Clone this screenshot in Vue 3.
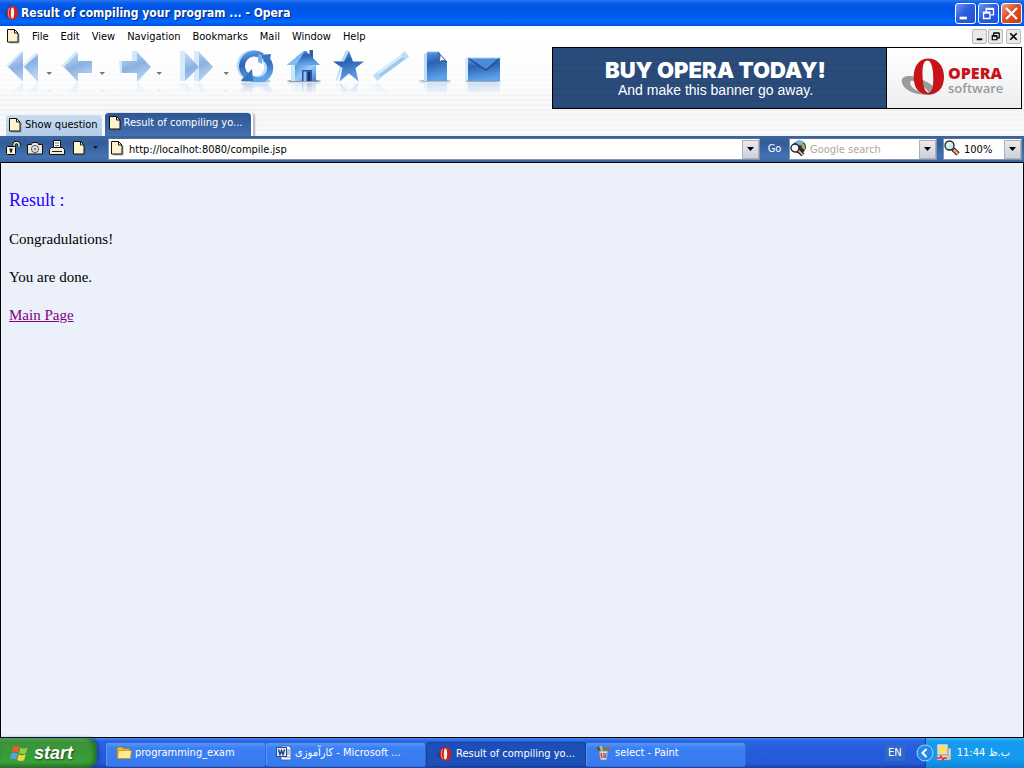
<script setup>
import { ref } from 'vue'

const menus = ['File', 'Edit', 'View', 'Navigation', 'Bookmarks', 'Mail', 'Window', 'Help']
const url = ref('http://localhot:8080/compile.jsp')
const search = ref('')
const zoom = ref('100%')
const tools = [
  { id: 't-rewind', label: 'Rewind', x: 5, w: 53 },
  { id: 't-back', label: 'Back', x: 58, w: 55 },
  { id: 't-forward', label: 'Forward', x: 113, w: 57 },
  { id: 't-fast', label: 'Fast forward', x: 170, w: 64 },
  { id: 't-reload', label: 'Reload', x: 234, w: 48 },
  { id: 't-home', label: 'Home', x: 282, w: 44 },
  { id: 't-star', label: 'Bookmarks', x: 326, w: 43 },
  { id: 't-wand', label: 'Wand', x: 369, w: 46 },
  { id: 't-doc', label: 'New page', x: 415, w: 42 },
  { id: 't-mail', label: 'Mail', x: 457, w: 50 },
]
const small = [
  { id: 'i-lock', label: 'Security' },
  { id: 'i-camera', label: 'Images' },
  { id: 'i-printer', label: 'Print' },
  { id: 'i-page', label: 'Mode' },
]
const tasks = [
  { icon: 'i-folder', text: 'programming_exam' },
  { icon: 'i-word', text: 'کارآموزی - Microsoft ...' },
  { icon: 'i-opera', text: 'Result of compiling yo...', active: true },
  { icon: 'i-paint', text: 'select - Paint' },
]
</script>

<template>
  <svg class="defs" aria-hidden="true">
    <defs>
      <linearGradient id="pale" x1="0" y1="0" x2="0.4" y2="1">
        <stop offset="0" stop-color="#c3ddf8" /><stop offset=".55" stop-color="#8bb0e0" /><stop offset="1" stop-color="#b4d4f6" />
      </linearGradient>
      <linearGradient id="deep" x1="0" y1="0" x2="0.2" y2="1">
        <stop offset="0" stop-color="#5b9be0" /><stop offset=".4" stop-color="#2c62b4" /><stop offset="1" stop-color="#5fa4e8" />
      </linearGradient>
      <linearGradient id="wall" x1="0" y1="0" x2="1" y2="1">
        <stop offset="0" stop-color="#4a87d3" /><stop offset=".5" stop-color="#9dcbf8" /><stop offset="1" stop-color="#3c7ccb" />
      </linearGradient>
      <symbol id="i-page" viewBox="0 0 16 16">
        <path d="M4 3h7l3.500 3.500v9H4z" fill="#555" opacity=".5" />
        <path d="M2.500 1.500h7l3.500 3.500v9H2.500z" fill="#fdf3cf" stroke="#111" />
        <path d="M9.500 1.500v3.500H13z" fill="#fff" stroke="#111" />
      </symbol>
      <symbol id="i-lock" viewBox="0 0 16 16">
        <path d="M9 8V5a2.500 2.500 0 0 1 5 0v2" fill="none" stroke="#000" stroke-width="3" />
        <path d="M9 8V5a2.500 2.500 0 0 1 5 0v2" fill="none" stroke="#f4edcf" stroke-width="1.500" />
        <rect x="1.500" y="6.500" width="9" height="8" rx="1" fill="#fff8e0" stroke="#000" />
        <path d="M4.500 8.500h3v2H7V12.500H5v-2h-.5z" fill="#222" />
      </symbol>
      <symbol id="i-camera" viewBox="0 0 16 16">
        <path d="M.5 4.500h4l1-2h5l1 2h4v9.500H.5z" fill="#e9e6dc" stroke="#111" />
        <circle cx="8" cy="9" r="3.500" fill="#fff" stroke="#444" /><circle cx="8" cy="9" r="1.600" fill="#789" />
      </symbol>
      <symbol id="i-printer" viewBox="0 0 16 16">
        <path d="M4.500 .5h7v8h-7z" fill="#fff" stroke="#111" /><path d="M6 3h4M6 5.500h4" stroke="#777" />
        <path d="M.5 9.500l2-2h11l2 2v5H.5z" fill="#f2ecd5" stroke="#111" /><path d="M3 11.500h10" stroke="#222" />
      </symbol>
      <symbol id="i-opera" viewBox="0 0 16 16">
        <path d="M0 9c0-3 4-4 7-2s6 6 5 7-11 0-12-5z" fill="#25406e" opacity=".7" />
        <path fill-rule="evenodd" d="M8.500 1c3.500 0 5.500 3 5.500 7s-2 7-5.500 7S3 12 3 8s2-7 5.500-7zm0 1.500C7 2.500 6.800 4.600 6.800 8s.2 5.500 1.700 5.500 1.700-2.100 1.700-5.500-.2-5.500-1.700-5.500z" fill="#d41f16" />
        <path d="M9 2.500c1.600 1 1.600 10 0 11-2 .5-2.200-1-2.200-5.500S7.500 2 9 2.500z" fill="#f6ece8" />
        <path d="M5.500 3C4 5.500 4 10.500 5.500 13" stroke="#ff8c74" fill="none" />
      </symbol>
      <symbol id="i-glass" viewBox="0 0 16 16">
        <path d="M9 9l5 5" stroke="#111" stroke-width="4.500" /><path d="M9.500 9.500l4.500 4.500" stroke="#e7a96d" stroke-width="2.500" />
        <circle cx="5.500" cy="5.500" r="4.500" fill="#c8ebf3" stroke="#222" stroke-width="1.300" /><path d="M3.500 5.500l3-3" stroke="#fff" stroke-width="1.500" />
      </symbol>
      <symbol id="i-search" viewBox="0 0 16 16">
        <circle cx="9.500" cy="7" r="6.500" fill="#25364e" /><path d="M5 2.500c3-3 8-2 9 0l-3 3-4-1z" fill="#74b6e8" /><path d="M11 2l4 3v5l-3-2z" fill="#b2a64a" />
        <path d="M8 10l5 5" stroke="#111" stroke-width="4" /><path d="M8 10l5 5" stroke="#efad76" stroke-width="2" />
        <circle cx="5" cy="8" r="4" fill="#eef8fb" stroke="#222" stroke-width="1.300" />
      </symbol>
      <symbol id="i-folder" viewBox="0 0 16 16">
        <path d="M1 3.500l1-1.500h4l1.500 1.500H13.500V13H1z" fill="#e9b93a" stroke="#9a7312" stroke-width=".7" />
        <path d="M2.500 5.500H15.500L14.500 13.500H1.500z" fill="#ffe98e" stroke="#b8891a" stroke-width=".7" />
      </symbol>
      <symbol id="i-word" viewBox="0 0 16 16">
        <path d="M5 1h8l2 2v12H5z" fill="#fff" stroke="#4665a5" /><path d="M11 5h3M11 7h3M11 9h3M7 12h7" stroke="#6583bd" />
        <rect x=".5" y="2.500" width="10" height="9" fill="#dfe9fb" stroke="#294d96" /><path d="M2.500 4.500L4 9.500l1.500-4 1.500 4 1.500-5" stroke="#1d3f8e" fill="none" stroke-width="1.400" />
      </symbol>
      <symbol id="i-paint" viewBox="0 0 16 16">
        <path d="M4 7L1.500 2" stroke="#7d3c14" stroke-width="2" /><path d="M6 7L5 1" stroke="#e8c22e" stroke-width="2" />
        <path d="M8 7l1-5" stroke="#3da23f" stroke-width="2" /><path d="M10 8l3-6" stroke="#d8541f" stroke-width="2.500" />
        <path d="M3 6h9l-1.500 9h-6z" fill="#cfdbe8" stroke="#7b8898" stroke-width=".6" /><path d="M5 8l1 5M8 8v5" stroke="#dc432a" stroke-width="1.500" /><path d="M10 8l-.5 5" stroke="#2864c4" />
      </symbol>
      <symbol id="i-net" viewBox="0 0 16 18">
        <path d="M2 1h9v9H2z" fill="#ffe25a" stroke="#d6dcec" stroke-width="1.500" /><path d="M12 4h3v12h-4v-5h1z" fill="#e5dfc8" stroke="#68728a" stroke-width=".6" />
        <path d="M1 11h12v5H1z" fill="#dcd9d2" stroke="#8d8f98" stroke-width=".6" /><path d="M1 14h3l1-2 2 4 1-2h3" stroke="#e02c1d" stroke-width="1.300" fill="none" />
      </symbol>

      <symbol id="t-rewind" viewBox="5 47 53 35">
        <path d="M6 66L20 52l3-1v4L9 68zM22 66l13-13h3v4L25 68z" fill="#d5eafd" />
        <path d="M8 67L23 52v29.500zM24 67l14-13v28z" fill="url(#pale)" />
        <path d="M46.500 72h5.500l-2.800 3z" fill="#777" />
      </symbol>
      <symbol id="t-back" viewBox="58 47 55 35">
        <path d="M61 66L76 51l2 2v8h14v3L66 69z" fill="#cfe6fc" />
        <path d="M64 67L78 53v8h14v12H78v9z" fill="url(#pale)" />
        <path d="M99.500 72h5.500l-2.800 3z" fill="#777" />
      </symbol>
      <symbol id="t-forward" viewBox="113 47 57 35">
        <path d="M132 51h5l3 5-3 8h-5zM119 61h4v12h-3z" fill="#cfe6fc" />
        <path d="M122 61h15v-9l14 15-14 15v-9h-15z" fill="url(#pale)" />
        <path d="M156.500 72h5.500l-2.800 3z" fill="#777" />
      </symbol>
      <symbol id="t-fast" viewBox="170 47 64 35">
        <path d="M180 51h5v30h-5zM194 51h5v30h-5z" fill="#d5eafd" />
        <path d="M185 52l14 15-14 14zM199 52l14 15-14 15z" fill="url(#pale)" />
        <path d="M223.500 72h5.500l-2.800 3z" fill="#777" />
      </symbol>
      <symbol id="t-reload" viewBox="234 47 48 35">
        <ellipse cx="256" cy="81" rx="15" ry="1.500" fill="#6b7f99" opacity=".5" />
        <g transform="translate(-1.500 -.5)" fill="none" stroke="#b9dcf9" stroke-width="6"><path d="M248 77A12 12 0 0 1 259 55M264 58A12 12 0 0 1 253 79" /></g>
        <g fill="none" stroke="url(#deep)" stroke-width="6"><path d="M247 76A12 12 0 0 1 262 56M265 58A12 12 0 0 1 251 78" /></g>
        <path d="M259 55l12-1-2 11zM241 81l1-2 10-10 1 12z" fill="#3575c4" /><path d="M258 54v8l4 2v-9z" fill="#74aee9" />
      </symbol>
      <symbol id="t-home" viewBox="282 47 44 35">
        <ellipse cx="304" cy="81" rx="17" ry="1.500" fill="#41536b" opacity=".6" />
        <path d="M291 66l5-3v18h-5z" fill="#c5e6ff" /><path d="M295 63h21v18h-21z" fill="url(#wall)" />
        <path d="M309.500 50h3.500v11h-3.500z" fill="#315e9f" /><path d="M287 65l17-14 2 0 14 14z" fill="url(#deep)" /><path d="M287 65l18-14-9 14z" fill="#84bbf1" />
        <path d="M302 70h10v11h-10z" fill="#2657a4" /><path d="M303.500 71.500h3v10h-3z" fill="#98bde8" /><path d="M308 72h2v9h-2z" fill="#142f66" />
      </symbol>
      <symbol id="t-star" viewBox="326 47 43 35">
        <path d="M346 50l3 1-5 11-7 19-1-1 4-13-7-6h8z" fill="#b4daf9" />
        <path d="M349 51l4 10.500h11L355.500 68l3 13.500-9.500-8-9.500 8 3-13.500-9.500-6.500h11z" fill="url(#deep)" />
      </symbol>
      <symbol id="t-wand" viewBox="369 47 46 35">
        <path d="M376 77l30-22" stroke="#9fc7ee" stroke-width="6" /><path d="M375 75.500l30-22" stroke="#d8edfd" stroke-width="2.500" />
        <path d="M375 78l4-3M403 57l4-3" stroke="#bedcf7" stroke-width="7" />
      </symbol>
      <symbol id="t-doc" viewBox="415 47 42 35">
        <ellipse cx="435" cy="81" rx="16" ry="1.500" fill="#41536b" opacity=".4" />
        <path d="M424 54l4-2v29h-4z" fill="#b7ddfb" /><path d="M427 52h11l9 10v19h-20z" fill="url(#deep)" />
        <path d="M427 52h11" stroke="#8fc3f3" /><path d="M438 52c3 2 2 5 1 10 3-2 6-2 8 0z" fill="#e9f4fe" stroke="#1d4387" stroke-width=".8" />
      </symbol>
      <symbol id="t-mail" viewBox="457 47 50 35">
        <ellipse cx="483" cy="81" rx="18" ry="1.500" fill="#41536b" opacity=".5" />
        <path d="M465 58h4v22h-4z" fill="#d6ecfd" /><path d="M468 58h32v23h-32z" fill="url(#deep)" /><path d="M468 58h32L486 70z" fill="#4a8cdb" />
        <path d="M468 58l18 12 14-12" fill="none" stroke="#204f96" stroke-width="1.500" /><path d="M468 58h32" stroke="#a8d3f8" />
      </symbol>
    </defs>
  </svg>

  <div class="screen">
    <header class="title">
      <svg class="ic"><use href="#i-opera" /></svg>
      <h1>Result of compiling your program ... - Opera</h1>
      <div class="winbtns">
        <button aria-label="Minimize"><svg viewBox="0 0 21 21"><path d="M4 14h8v3H4z" fill="#fff" /></svg></button>
        <button aria-label="Restore"><svg viewBox="0 0 21 21"><path d="M8 9V5h8v7h-3M5 9h7v7H5zM5 10h7M8 6h8" fill="none" stroke="#fff" stroke-width="1.500" /></svg></button>
        <button class="close" aria-label="Close"><svg viewBox="0 0 21 21"><path d="M4.500 4.500l12 12M16.500 4.500l-12 12" stroke="#fff" stroke-width="2.500" /></svg></button>
      </div>
    </header>

    <div class="chrome">
      <nav class="menu">
        <svg class="ic"><use href="#i-page" /></svg>
        <button v-for="m in menus" :key="m">{{ m }}</button>
        <div class="mdi">
          <button aria-label="Minimize page"><svg viewBox="0 0 14 14"><path d="M4 9h6v2H4z" /></svg></button>
          <button aria-label="Restore page"><svg viewBox="0 0 14 14"><path d="M5 6V3.500h6v5H9M3.500 6.500h5v4h-5zM5 3h6M3 6h6" fill="none" stroke="#000" stroke-width="1.300" /></svg></button>
          <button class="gap" aria-label="Close page"><svg viewBox="0 0 14 14"><path d="M3.500 3.500l7 7M10.500 3.500l-7 7" stroke="#000" stroke-width="1.800" /></svg></button>
        </div>
      </nav>

      <div class="toolbar">
        <button v-for="t in tools" :key="t.id" :aria-label="t.label">
          <svg :width="t.w" height="35"><use :href="'#' + t.id" /></svg>
        </button>
        <a class="banner" href="#">
          <span class="pitch"><strong>BUY OPERA TODAY!</strong><span>And make this banner go away.</span></span>
          <span class="brand">
            <svg viewBox="0 0 44 38">
              <path fill-rule="evenodd" d="M1 25c-2-7 7-9 17-5 13 5 22 13 16 16S4 37 1 25zm9-2c-3 5 6 12 19 13C27 31 15 22 10 23z" fill="#9a9c9c" />
              <path fill-rule="evenodd" d="M28 0c9 0 16 7 16 19s-7 18-16 18-15-6-15-18S19 0 28 0zm-1 2c-4 0-5 6-5 14 0 10 2 19 6 19s5-6 5-15c0-10-2-18-6-18z" fill="#c81418" />
            </svg>
            <span class="words"><b>OPERA</b><span>software</span></span>
          </span>
        </a>
      </div>

      <div class="tabs" role="tablist">
        <button class="tab" role="tab"><svg class="ic"><use href="#i-page" /></svg>Show question</button>
        <button class="tab on" role="tab" aria-selected="true"><svg class="ic"><use href="#i-page" /></svg>Result of compiling yo...</button>
      </div>
    </div>

    <form class="address" @submit.prevent>
      <div class="smalls">
        <button v-for="s in small" :key="s.id" type="button" :aria-label="s.label"><svg class="ic"><use :href="'#' + s.id" /></svg></button>
        <button type="button" class="more" aria-label="More"><svg viewBox="0 0 5 3"><path d="M0 0h5L2.500 3z" fill="#0b1a33" /></svg></button>
      </div>
      <div class="box url">
        <svg class="ic"><use href="#i-page" /></svg>
        <input v-model="url" aria-label="Address">
        <button type="button" aria-label="Address history"><svg viewBox="0 0 7 4"><path d="M0 0h7L3.500 4z" /></svg></button>
      </div>
      <button class="go">Go</button>
      <div class="box search">
        <svg class="ic"><use href="#i-search" /></svg>
        <input v-model="search" aria-label="Search" placeholder="Google search">
        <button type="button" aria-label="Search engines"><svg viewBox="0 0 7 4"><path d="M0 0h7L3.500 4z" /></svg></button>
      </div>
      <div class="box zoom">
        <svg class="ic"><use href="#i-glass" /></svg>
        <input v-model="zoom" aria-label="Zoom">
        <button type="button" aria-label="Zoom levels"><svg viewBox="0 0 7 4"><path d="M0 0h7L3.500 4z" /></svg></button>
      </div>
    </form>

    <main class="page">
      <h2>Result :</h2>
      <p>Congradulations!</p>
      <p>You are done.</p>
      <p><a href="#">Main Page</a></p>
    </main>

    <footer class="taskbar">
      <button class="start">
        <svg viewBox="0 0 20 18">
          <path d="M3 3c2-1.500 4-1.500 6.500 0L8 8.500C6 7 4 7 1.500 8.500z" fill="#f0592a" /><path d="M10.500 3.500c2 1.500 4 1.500 7 0L16 9c-2.500 1.500-4.500 1-7 0z" fill="#8ed047" />
          <path d="M1.200 9.800c2-1.500 4-1.500 6.500 0L6.200 15.500C4 14 2 14-.2 15.500z" fill="#5b9df2" /><path d="M8.700 10.300c2 1.500 4 1.500 7 0L14.200 16c-2.500 1.500-4.500 1-7 0z" fill="#fbd335" />
        </svg>start
      </button>
      <button v-for="t in tasks" :key="t.icon" class="task" :class="{ active: t.active }">
        <svg class="ic"><use :href="'#' + t.icon" /></svg><span dir="ltr">{{ t.text }}</span>
      </button>
      <button class="lang">EN</button>
      <div class="tray">
        <button class="expand" aria-label="Show hidden icons"><svg viewBox="0 0 18 18"><circle cx="9" cy="9" r="8" fill="#2489e8" stroke="#9ed4fb" /><path d="M10.500 5l-4 4 4 4" fill="none" stroke="#fff" stroke-width="2" /></svg></button>
        <svg class="net"><use href="#i-net" /></svg>
        <time dir="ltr"><bdi>11:44</bdi> <bdi>ب.ظ</bdi></time>
      </div>
    </footer>
  </div>
</template>

<style>
body { margin: 0; }
</style>

<style scoped>
* { box-sizing: border-box; }
button, input { font: inherit; color: inherit; padding: 0; margin: 0; border: 0; background: none; }
button { white-space: nowrap; }
.defs { position: absolute; width: 0; height: 0; }
.ic { width: 16px; height: 16px; flex: none; display: block; }
.screen { min-height: 100vh; display: flex; flex-direction: column; font: 11px/14px "DejaVu Sans Condensed", "DejaVu Sans", sans-serif; color: #000; background: #ecf0fb; }

.title { height: 26px; display: flex; align-items: center; gap: 1px; padding: 0 2px 0 4px; color: #fff;
  background: linear-gradient(#2a78f0 0, #0a5cea 12%, #0054e3 30%, #005cf0 60%, #0068ff 85%, #0050d8 100%); }
.title h1 { margin: 0; flex: 1; font: bold 12px/16px "DejaVu Sans Condensed", "DejaVu Sans", sans-serif; text-shadow: 1px 1px 1px #05246f; white-space: nowrap; }
.winbtns { display: flex; gap: 2px; }
.winbtns button { width: 21px; height: 21px; border: 1px solid #fff; border-radius: 3px; background: linear-gradient(135deg, #6f98f5, #2c5ce0 45%, #1f54dd); }
.winbtns svg { display: block; width: 19px; height: 19px; }
.winbtns .close { background: linear-gradient(135deg, #f0a084, #df4f27 45%, #c63c10); }

.chrome { background: repeating-linear-gradient(rgba(255, 255, 255, .5) 0 3px, transparent 3px 5px), linear-gradient(#fff 15%, #f8f9fb 55%, #eff1f3 75%, #f5f6f8); }
.menu { height: 21px; display: flex; align-items: center; padding: 0 3px 0 5px; }
.menu > button { margin-left: 12px; }
.menu > .ic { margin-bottom: 2px; }
.menu > .ic + button { margin-left: 11px; }
.mdi { margin-left: auto; display: flex; gap: 1px; }
.mdi button { width: 15px; height: 15px; background: #eae9e8; border: 1px solid #b9b9b9; border-radius: 2px; }
.mdi .gap { margin-left: 2px; }
.mdi svg { display: block; width: 13px; height: 13px; }

.toolbar { height: 65px; display: flex; align-items: flex-start; padding: 0 2px 0 5px; }
.toolbar button svg { display: block; -webkit-box-reflect: below 0 linear-gradient(transparent 65%, rgba(0, 0, 0, .3)); }
.banner { margin-left: auto; display: flex; height: 62px; border: 1px solid #000; color: #fff; text-decoration: none; font-family: "Liberation Sans", Arial, sans-serif; }
.pitch { width: 333px; display: flex; flex-direction: column; align-items: center; justify-content: center; padding: 2px 8px 0 0;
  background: repeating-linear-gradient(#2a4c7b 0 4px, #284875 4px 6px); font-size: 14px; line-height: 18px; }
.pitch strong { font: 900 22px/22px Inter, "Liberation Sans", sans-serif; }
.brand { width: 135px; border-left: 1px solid #000; display: flex; align-items: center; gap: 4px; padding-left: 14px; background: linear-gradient(#fff, #eceef0); }
.brand svg { width: 43px; height: 38px; margin-bottom: 3px; }
.words { display: flex; flex-direction: column; font: 600 13px/14px "Open Sans", sans-serif; color: #97999a; padding-top: 5px; }
.words b { font: 800 16px/15px "Open Sans", sans-serif; color: #c81418; }

.tabs { height: 24px; display: flex; align-items: flex-end; gap: 3px; padding-left: 6px; }
.tab { height: 21px; display: flex; align-items: center; gap: 2px; padding: 0 4px 1px 1px; border-radius: 4px 4px 0 0; background: linear-gradient(#c9dcf0, #b2cce8); }
.tab.on { height: 24px; color: #fff; padding: 0 9px 3px 2px; gap: 1px; background: linear-gradient(#2f5692, #4270b0); border-top: 1px solid #dce6f2; box-shadow: 2px 0 0 #fff, 4px 1px 2px #b4b8be; }
.tab .ic { margin-bottom: 1px; }

.address { height: 26px; display: flex; align-items: center; padding: 0 2px 0 5px; color: #fff; background: linear-gradient(#3a659f, #335d98 30%, #4373b4 80%, #3b6399); }
.smalls { display: flex; align-items: center; gap: 6px; padding-bottom: 3px; }
.more svg { display: block; width: 5px; height: 3px; }
.box { height: 22px; display: flex; align-items: center; background: #fff; color: #000; border: 1px solid #8295ae; border-top-color: #5b6d88; min-width: 0; }
.box .ic { margin-bottom: 2px; }
.box input { flex: 1; min-width: 0; outline: 0; height: 18px; }
.box input::placeholder { color: #aca899; opacity: 1; }
.box button { width: 17px; height: 19px; background: linear-gradient(#e9e9ee, #cfcfd8); border: 1px solid #aeb1bd; display: flex; align-items: center; justify-content: center; flex: none; }
.box button svg { width: 7px; height: 4px; }
.url { flex: 1; margin-left: 10px; }
.url input { margin-left: 4px; }
.go { width: 29px; }
.search { width: 148px; }
.search input { margin-left: 4px; }
.zoom { width: 79px; margin-left: 6px; }
.zoom input { margin-left: 4px; }

.page { flex: 1; border: 1px solid #000; padding: 28px 8px; font: 15px/19px "Liberation Serif", "Times New Roman", serif; }
.page h2 { margin: 0 0 20px; font-size: 18px; font-weight: 400; color: #2a00ff; }
.page p { margin: 0 0 19px; }
.page a { color: #800080; }

.taskbar { height: 30px; display: flex; align-items: center; color: #fff;
  background: linear-gradient(#3f8cf3 0, #2a62e0 10%, #245bdb 60%, #2359d8 85%, #1941a5 100%); }
.start { width: 97px; height: 30px; display: flex; align-items: center; gap: 4px; padding: 0 0 1px 10px; margin-right: 9px; border-radius: 0 10px 10px 0;
  font: italic bold 18px/22px "Liberation Sans", Arial, sans-serif; text-shadow: 1px 1px 2px #1c4a16;
  background: linear-gradient(#6cb865 0, #3c933a 15%, #379c37 60%, #3aa23a 80%, #2a7429 100%); box-shadow: inset -3px 0 5px #246b25, 2px 0 3px #1a43a8; }
.start svg { width: 20px; height: 18px; }
.task { flex: 0 1 160px; min-width: 0; height: 25px; margin-top: 2px; display: flex; align-items: center; gap: 3px; padding: 0 9px 2px; border: 1px solid #3567d3; border-left-color: #5a94f6; border-radius: 3px; background: linear-gradient(#5a96fa, #3b81f3 20%, #3879ee); }
.task.active { background: #1c4fb8; border-color: #163f98; padding: 0 10px; }
.lang { margin-left: auto; width: 20px; height: 16px; background: #316ac5; }
.tray { height: 30px; margin-left: 20px; display: flex; align-items: center; padding-right: 14px; border-left: 1px solid #1042af; background: linear-gradient(#3fb6f5 0, #169bee 12%, #129aef 70%, #0f84d8 100%); }
.expand { margin-left: -10px; width: 18px; height: 18px; }
.expand svg { display: block; width: 18px; height: 18px; }
.net { width: 16px; height: 18px; margin: 0 5px 0 2px; }
</style>
